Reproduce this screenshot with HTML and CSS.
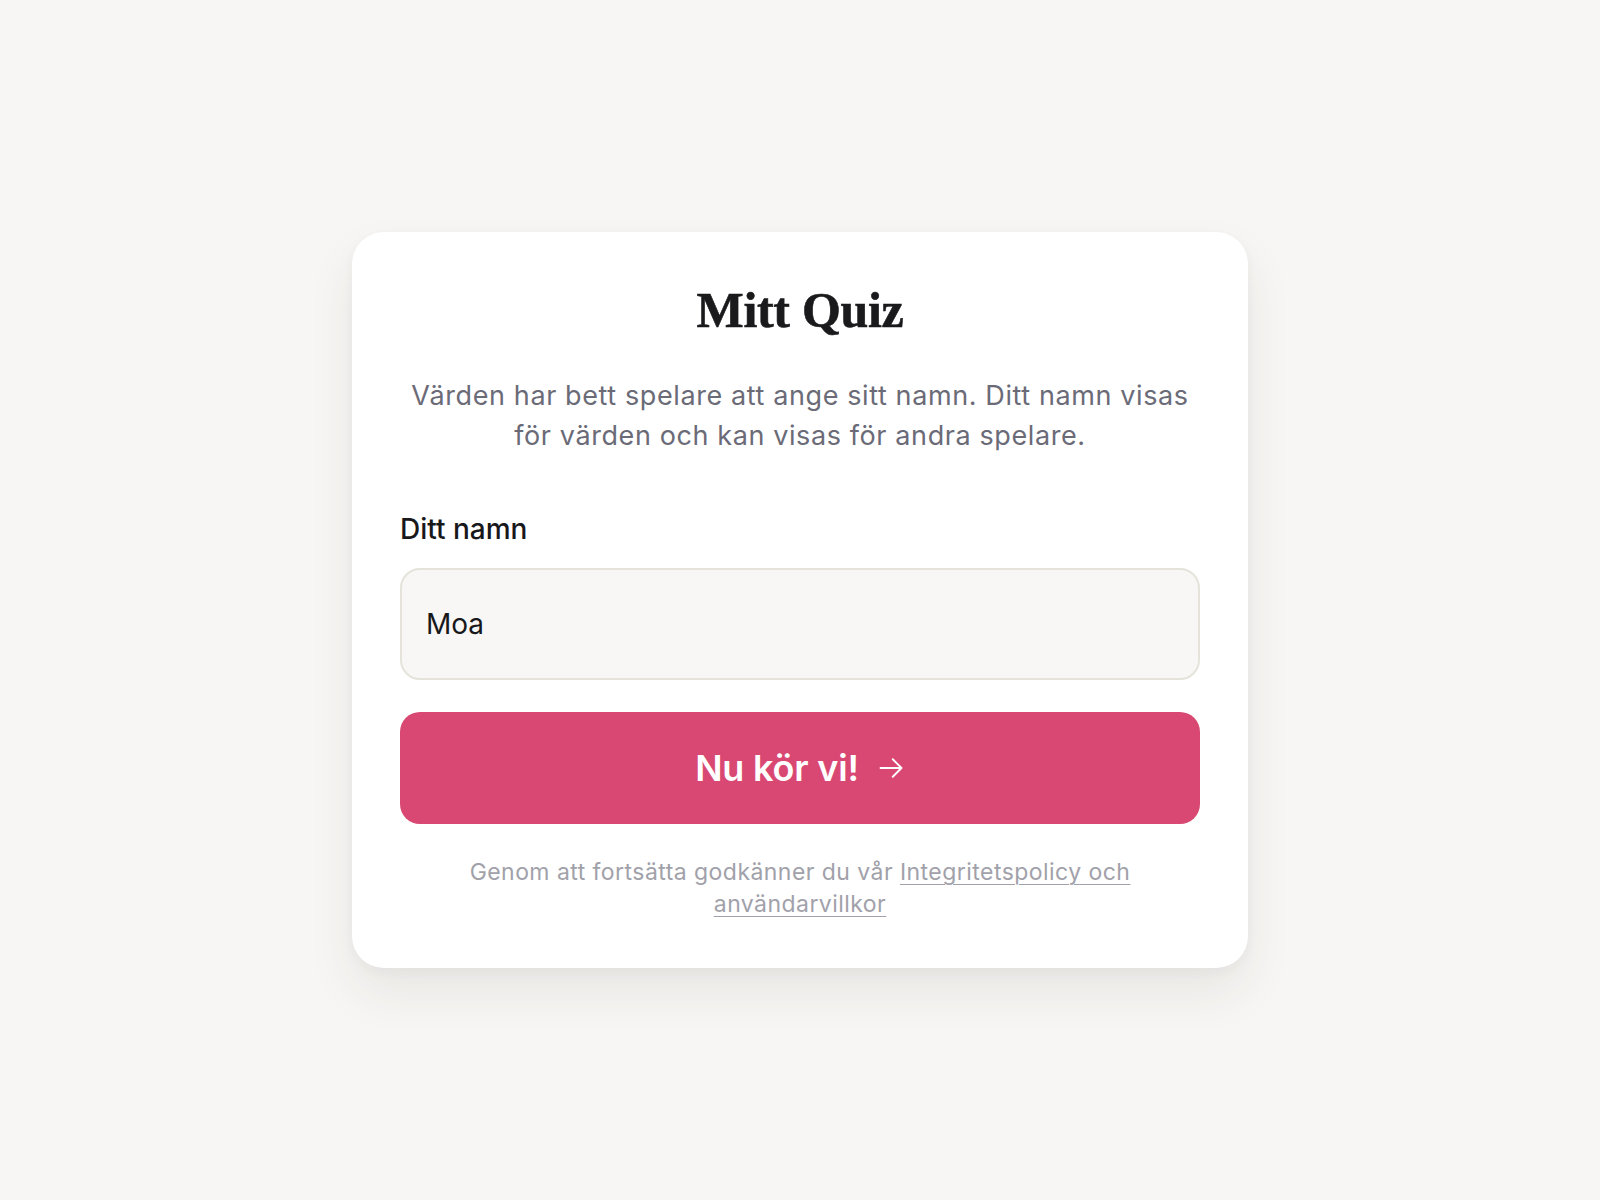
FILE: index.html
```html
<!DOCTYPE html>
<html lang="sv">
<head>
<meta charset="utf-8">
<title>Mitt Quiz</title>
<link rel="stylesheet" href="styles.css">
</head>
<body>
<main class="page">
  <section class="card">
    <h1 class="title">Mitt Quiz</h1>
    <p class="lead">Värden har bett spelare att ange sitt namn. Ditt namn visas för värden och kan visas för andra spelare.</p>
    <label class="label" for="name">Ditt namn</label>
    <input class="input" id="name" type="text" value="Moa">
    <button class="btn" type="button">
      <span>Nu kör vi!</span>
      <svg class="btn-icon" viewBox="0 0 24 24" fill="none" stroke="currentColor" stroke-width="1.6" stroke-linecap="round" stroke-linejoin="round"><path d="M13.5 4.5L21 12l-7.5 7.5M21 12H3"/></svg>
    </button>
    <p class="terms">Genom att fortsätta godkänner du vår <a class="terms-link" href="#">Integritetspolicy och användarvillkor</a></p>
  </section>
</main>
</body>
</html>
```
FILE: styles.css
```css
* { box-sizing: border-box; }
html, body { margin: 0; padding: 0; }
body {
  background: #f7f6f4;
  font-family: Inter, "Noto Sans", sans-serif;
  color: #18181b;
}
.page {
  min-height: 1200px;
  display: flex;
  align-items: center;
  justify-content: center;
}
.card {
  width: 896px;
  background: #ffffff;
  border-radius: 32px;
  padding: 48px;
  display: flex;
  flex-direction: column;
  box-shadow: 0 24px 48px rgba(60, 50, 40, 0.08), 0 4px 12px rgba(60, 50, 40, 0.04);
}
.title {
  margin: 0;
  font-family: "Liberation Serif", "Times New Roman", serif;
  font-weight: 700;
  font-size: 50px;
  line-height: 60px;
  text-align: center;
  color: #1a1a1c;
  letter-spacing: -0.3px;
  -webkit-text-stroke: 0.6px #1a1a1c;
}
.lead {
  margin: 36px 0 56px;
  font-size: 27px;
  line-height: 40px;
  letter-spacing: 0.6px;
  text-align: center;
  color: #6b6b78;
}
.label {
  font-size: 28px;
  font-weight: 500;
  line-height: 34px;
  color: #18181b;
  margin-bottom: 22px;
}
.input {
  height: 112px;
  width: 100%;
  border: 2px solid #e6e3dc;
  border-radius: 20px;
  background: #f8f7f5;
  padding: 0 24px;
  font-family: Inter, "Noto Sans", sans-serif;
  font-size: 28px;
  color: #18181b;
  outline: none;
}
.btn {
  margin-top: 32px;
  height: 112px;
  width: 100%;
  border: none;
  border-radius: 20px;
  background: #d94872;
  color: #ffffff;
  font-family: Inter, "Noto Sans", sans-serif;
  font-size: 36px;
  font-weight: 600;
  letter-spacing: -0.2px;
  display: flex;
  align-items: center;
  justify-content: center;
  gap: 18px;
  cursor: pointer;
}
.btn-icon {
  width: 28px;
  height: 28px;
}
.terms {
  margin: 32px 0 0;
  font-size: 23px;
  line-height: 32px;
  letter-spacing: 0.45px;
  text-align: center;
  color: #a1a1aa;
}
.terms-link {
  color: #a1a1aa;
  text-decoration: underline;
  text-underline-offset: 4px;
  text-decoration-thickness: 1px;
}
```
